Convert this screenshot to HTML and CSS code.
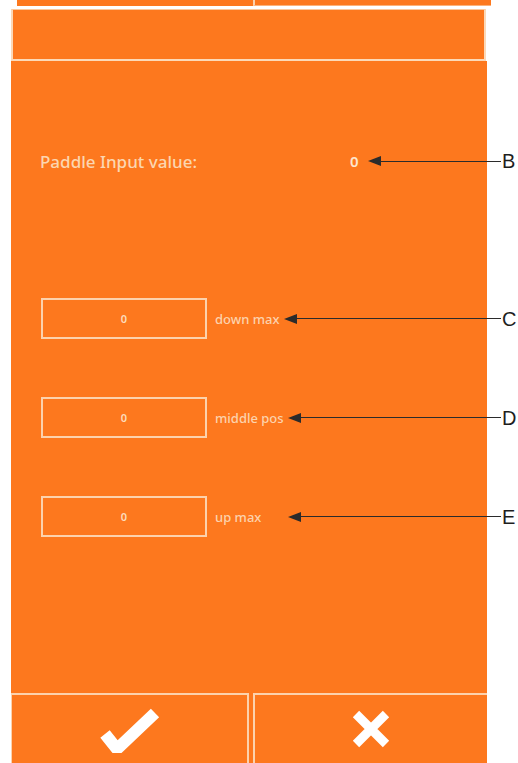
FILE: index.html
```html
<!DOCTYPE html>
<html lang="en">
<head>
    <meta charset="UTF-8">
    <meta name="viewport" content="width=device-width, initial-scale=1.0">
    <title>Paddle Calibration</title>
    <link rel="stylesheet" href="styles.css">
</head>
<body>
    <div class="tabs">
        <div class="tab"></div>
        <div class="tab tab-right"></div>
    </div>
    <div class="title-bar"></div>

    <div class="panel">
        <div class="value-row">
            <span class="value-label">Paddle Input value:</span>
            <span class="value-num">0</span>
            <div class="callout callout-b">
                <span class="arrow-head"></span>
                <span class="arrow-line"></span>
                <span class="letter">B</span>
            </div>
        </div>

        <div class="field-row">
            <div class="field">0</div>
            <span class="field-label">down max</span>
            <div class="callout">
                <span class="arrow-head"></span>
                <span class="arrow-line"></span>
                <span class="letter">C</span>
            </div>
        </div>

        <div class="field-row">
            <div class="field">0</div>
            <span class="field-label">middle pos</span>
            <div class="callout">
                <span class="arrow-head"></span>
                <span class="arrow-line"></span>
                <span class="letter">D</span>
            </div>
        </div>

        <div class="field-row">
            <div class="field">0</div>
            <span class="field-label">up max</span>
            <div class="callout callout-far">
                <span class="arrow-head"></span>
                <span class="arrow-line"></span>
                <span class="letter">E</span>
            </div>
        </div>
    </div>

    <div class="actions">
        <button class="action" type="button">
            <svg width="62" height="48" viewBox="0 0 62 48">
                <path d="M6 29 L18 44 L56 8" fill="none" stroke="#fff" stroke-width="12" stroke-linejoin="miter"/>
            </svg>
        </button>
        <button class="action" type="button">
            <svg width="40" height="40" viewBox="0 0 40 40">
                <path d="M5 5 L35 35 M35 5 L5 35" fill="none" stroke="#fff" stroke-width="9"/>
            </svg>
        </button>
    </div>
</body>
</html>
```

FILE: styles.css
```css
body {
    margin: 0;
    width: 518px;
    height: 763px;
    overflow: hidden;
    background-color: #fff;
    font-family: "Noto Sans", "Open Sans", sans-serif;
}

/* Top tab strip (cut off by the screen edge) */
.tabs {
    display: flex;
    margin-left: 17px;
    width: 474px;
    height: 6px;
    background-color: #fd781e;
}

.tab {
    flex: 1;
}

.tab-right {
    border-left: 2px solid #fcd2ad;
    border-bottom: 1px solid #fcb27a;
}

.title-bar {
    margin: 3px 0 0 11px;
    width: 471px;
    height: 49px;
    background-color: #fd781e;
    border: 2px solid #fcd9b8;
    border-top: 1px solid #fcc79a;
}

.panel {
    margin-left: 11px;
    width: 476px;
    height: 542px;
    padding-top: 90px;
    background-color: #fd781e;
}

.value-row {
    display: flex;
    align-items: center;
    height: 20px;
    padding-left: 29px;
    margin-right: -31px;
}

.value-label {
    width: 310px;
    font-size: 17px;
    font-weight: 500;
    color: #fcd6b0;
}

.value-num {
    font-size: 15px;
    font-weight: 600;
    color: #fde6cf;
}

.field-row {
    display: flex;
    align-items: center;
    padding-left: 30px;
    margin-top: 58px;
    margin-right: -31px;
}

.value-row + .field-row {
    margin-top: 127px;
}

.field {
    width: 162px;
    height: 37px;
    border: 2px solid #fcd2ad;
    display: flex;
    align-items: center;
    justify-content: center;
    font-size: 11px;
    font-weight: 600;
    color: #fcdcbd;
}

.field-label {
    margin-left: 8px;
    font-size: 13px;
    font-weight: 500;
    color: #fcd2ad;
}

/* Annotation arrows pointing at the values */
.callout {
    flex: 1;
    display: flex;
    align-items: center;
    margin-left: 4px;
}

.callout-b {
    margin-left: 9px;
}

.callout-far {
    margin-left: 27px;
}

.arrow-head {
    width: 0;
    height: 0;
    border-top: 5px solid transparent;
    border-bottom: 5px solid transparent;
    border-right: 13px solid #2b2b2b;
}

.arrow-line {
    flex: 1;
    height: 1px;
    background-color: #2b2b2b;
}

.letter {
    margin-left: 1px;
    font-family: "Liberation Sans", Arial, sans-serif;
    font-size: 20px;
    color: #1e1e1e;
    line-height: 20px;
    width: 16px;
}

.actions {
    display: flex;
    justify-content: space-between;
    margin-left: 11px;
    width: 476px;
    height: 80px;
    background-color: #fd781e;
}

.action {
    width: 238px;
    height: 80px;
    padding: 0;
    padding-bottom: 10px;
    background-color: #fd781e;
    border: 2px solid #fcd2ad;
    border-bottom: none;
    display: flex;
    align-items: center;
    justify-content: center;
    cursor: pointer;
}

.action + .action {
    width: 234px;
    border-right: none;
}

.action:first-child {
    border-left-width: 1px;
}
```
